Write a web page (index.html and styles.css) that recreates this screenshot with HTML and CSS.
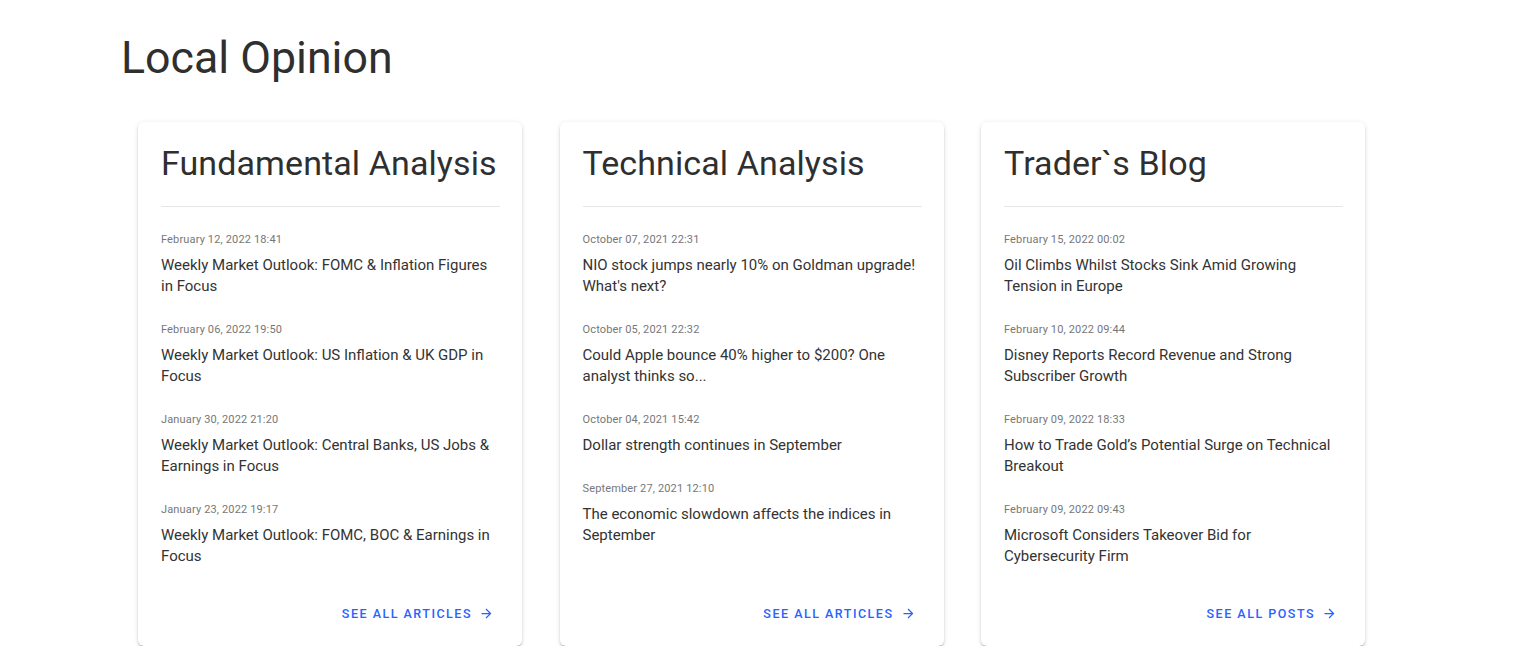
FILE: index.html
```html
<!DOCTYPE html>
<html lang="en">
<head>
<meta charset="utf-8">
<title>Local Opinion</title>
<link rel="stylesheet" href="styles.css">
</head>
<body>
<main class="page">
  <h1 class="page-title">Local Opinion</h1>
  <div class="cards">
    <section class="card">
      <h2 class="card-title">Fundamental Analysis</h2>
      <hr class="divider">
      <ul class="items">
        <li class="item"><div class="date">February 12, 2022 18:41</div><a class="headline">Weekly Market Outlook: FOMC &amp; Inflation Figures in Focus</a></li>
        <li class="item"><div class="date">February 06, 2022 19:50</div><a class="headline">Weekly Market Outlook: US Inflation &amp; UK GDP in Focus</a></li>
        <li class="item"><div class="date">January 30, 2022 21:20</div><a class="headline">Weekly Market Outlook: Central Banks, US Jobs &amp; Earnings in Focus</a></li>
        <li class="item"><div class="date">January 23, 2022 19:17</div><a class="headline">Weekly Market Outlook: FOMC, BOC &amp; Earnings in Focus</a></li>
      </ul>
      <div class="actions"><a class="more">See all articles<svg class="arrow" viewBox="0 0 24 24"><path d="M4,11V13H16L10.5,18.5L11.92,19.92L19.84,12L11.92,4.08L10.5,5.5L16,11H4Z"/></svg></a></div>
    </section>
    <section class="card">
      <h2 class="card-title">Technical Analysis</h2>
      <hr class="divider">
      <ul class="items">
        <li class="item"><div class="date">October 07, 2021 22:31</div><a class="headline">NIO stock jumps nearly 10% on Goldman upgrade! What's next?</a></li>
        <li class="item"><div class="date">October 05, 2021 22:32</div><a class="headline">Could Apple bounce 40% higher to $200? One analyst thinks so...</a></li>
        <li class="item"><div class="date">October 04, 2021 15:42</div><a class="headline">Dollar strength continues in September</a></li>
        <li class="item"><div class="date">September 27, 2021 12:10</div><a class="headline">The economic slowdown affects the indices in September</a></li>
      </ul>
      <div class="actions"><a class="more">See all articles<svg class="arrow" viewBox="0 0 24 24"><path d="M4,11V13H16L10.5,18.5L11.92,19.92L19.84,12L11.92,4.08L10.5,5.5L16,11H4Z"/></svg></a></div>
    </section>
    <section class="card">
      <h2 class="card-title">Trader`s Blog</h2>
      <hr class="divider">
      <ul class="items">
        <li class="item"><div class="date">February 15, 2022 00:02</div><a class="headline">Oil Climbs Whilst Stocks Sink Amid Growing Tension in Europe</a></li>
        <li class="item"><div class="date">February 10, 2022 09:44</div><a class="headline">Disney Reports Record Revenue and Strong Subscriber Growth</a></li>
        <li class="item"><div class="date">February 09, 2022 18:33</div><a class="headline">How to Trade Gold’s Potential Surge on Technical Breakout</a></li>
        <li class="item"><div class="date">February 09, 2022 09:43</div><a class="headline">Microsoft Considers Takeover Bid for Cybersecurity Firm</a></li>
      </ul>
      <div class="actions"><a class="more">See all posts<svg class="arrow" viewBox="0 0 24 24"><path d="M4,11V13H16L10.5,18.5L11.92,19.92L19.84,12L11.92,4.08L10.5,5.5L16,11H4Z"/></svg></a></div>
    </section>
  </div>
</main>
</body>
</html>
```
FILE: styles.css
```css
* { box-sizing: border-box; }
html, body { margin: 0; padding: 0; background: #fff; }
body {
  font-family: Roboto, "Liberation Sans", Arial, sans-serif;
  color: #333;
}
.page {
  padding: 30px 0 0 121px;
}
.page-title {
  margin: 0;
  font-size: 44.7px;
  font-weight: 400;
  line-height: 56px;
  color: #2f2f2f;
}
.cards {
  display: flex;
  gap: 37.5px;
  margin: 36px 0 0 17px;
}
.card {
  width: 384px;
  background: #fff;
  border-radius: 6px;
  box-shadow: 0 3px 1px -2px rgba(0,0,0,.2), 0 2px 2px 0 rgba(0,0,0,.14), 0 1px 5px 0 rgba(0,0,0,.12);
  padding: 21px 22px 0 23px;
  display: flex;
  flex-direction: column;
}
.card-title {
  margin: 0;
  font-size: 34px;
  font-weight: 400;
  line-height: 40px;
  letter-spacing: 0.1px;
  color: #2f2f2f;
}
.divider {
  border: 0;
  border-top: 1px solid #e6e6e6;
  margin: 23px 0 25px 0;
}
.items {
  list-style: none;
  margin: 0;
  padding: 0;
}
.item {
  margin-bottom: 25px;
}
.date {
  font-size: 11px;
  line-height: 16px;
  letter-spacing: 0.15px;
  color: #777;
  margin-bottom: 7px;
}
.headline {
  display: block;
  font-size: 15px;
  line-height: 21px;
  color: #333;
}
.actions {
  display: flex;
  justify-content: flex-end;
  padding: 14px 6px 25px 0;
  margin-top: auto;
}
.more {
  display: inline-flex;
  align-items: center;
  font-size: 12.5px;
  font-weight: 500;
  text-transform: uppercase;
  letter-spacing: 1.5px;
  color: #2962ff;
  cursor: pointer;
}
.arrow {
  width: 15px;
  height: 15px;
  margin-left: 7px;
  fill: #2962ff;
}
```
